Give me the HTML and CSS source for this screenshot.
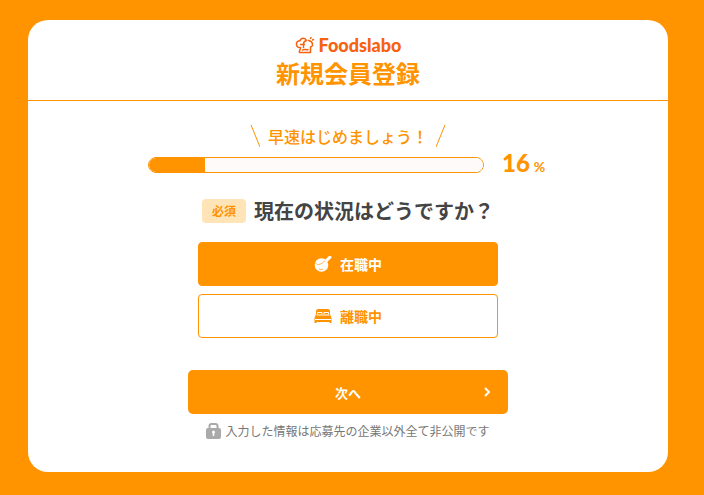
FILE: index.html
```
<!DOCTYPE html>
<html lang="ja">

<head>
    <meta charset="UTF-8">
    <meta name="viewport" content="width=device-width, initial-scale=1.0">
    <title>新規会員登録</title>
    <link rel="stylesheet" href="styles.css">
</head>

<body>
    <main class="card">
        <header class="card-header">
            <div class="logo">
                <svg class="logo-icon" viewBox="0 0 20 18" width="20" height="18" aria-hidden="true">
                    <path d="M5 11.500 C.5 11.500 0 5 5 4.800 C6 1.500 10.500 1.500 11.500 4.500 C9.500 5 8.500 6 8.500 8 V11.500 M5.500 8.500 H9.500 M13.500 4.500 C18.500 5.500 18.500 10.500 15.500 11 V16.500 H4.500 C3.500 15 5.500 14.500 5.500 11.500" />
                    <path d="M7.500 14 C9.500 12.500 11 14.500 13 13.500" />
                    <path d="M15.500 2.500 L16 1.500 M17.500 4 L18.500 3.500" />
                </svg>
                <span class="logo-text">Foodslabo</span>
            </div>
            <h1 class="title">新規会員登録</h1>
        </header>

        <form class="form">
            <div class="progress">
                <p class="progress-lead">
                    <svg class="slash" viewBox="0 0 10 24" width="10" height="24" aria-hidden="true"><path d="M1 1 L10 23" /></svg>
                    <span>早速はじめましょう！</span>
                    <svg class="slash" viewBox="0 0 10 24" width="10" height="24" aria-hidden="true"><path d="M9 1 L0 23" /></svg>
                </p>
                <div class="progress-row">
                    <progress class="progress-bar" value="16" max="96" aria-label="進捗"></progress>
                    <p class="progress-num">16<span class="progress-unit">%</span></p>
                </div>
            </div>

            <fieldset class="question">
                <legend class="question-title">
                    <span class="badge">必須</span>
                    <span>現在の状況はどうですか？</span>
                </legend>
                <label class="option">
                    <input type="radio" name="status" value="在職中" checked>
                    <svg class="option-icon" viewBox="0 0 18 16" width="18" height="16" aria-hidden="true">
                        <circle class="shape" cx="7.500" cy="9" r="6.800" />
                        <path class="handle" d="M11.500 5.500 L16 1.200" />
                        <path class="detail" d="M2 7.500 C3 9.500 8 8.500 11 4.500 M5 13 Q7 14 9 13" />
                    </svg>
                    在職中
                </label>
                <label class="option">
                    <input type="radio" name="status" value="離職中">
                    <svg class="option-icon" viewBox="0 0 18 16" width="18" height="16" aria-hidden="true">
                        <path class="shape" d="M2 6 V3.500 Q2 1 4.500 1 H13.500 Q16 1 16 3.500 V6 L17.500 10 V15 H15.500 V14 H2.500 V15 H.5 V10 Z" />
                        <path class="detail" d="M3.500 6 V4.500 H8 V6 M10 6 V4.500 H14.500 V6 M2.500 7 H15.500 M1 11.500 H17" />
                    </svg>
                    離職中
                </label>
            </fieldset>

            <button class="next" type="submit">
                次へ
                <svg class="next-arrow" viewBox="0 0 6 10" width="6" height="10" aria-hidden="true"><path d="M1 1 L5 5 L1 9" /></svg>
            </button>

            <p class="note">
                <svg class="lock" viewBox="0 0 15 16" width="15" height="16" aria-hidden="true">
                    <path class="shackle" d="M3.500 6 V3 Q3.500 1 5.500 1 H9.500 Q11.500 1 11.500 3 V6" />
                    <rect x="0" y="5" width="15" height="11" rx="2" />
                    <circle cx="7.500" cy="9" r="1.500" fill="#fff" />
                    <path class="keyhole" d="M7.500 9 V13" />
                </svg>
                入力した情報は応募先の企業以外全て非公開です
            </p>
        </form>
    </main>
</body>

</html>
```

FILE: styles.css
```
* {
    box-sizing: border-box;
}

body {
    margin: 0;
    padding: 20px 36px 20px 28px;
    background-color: #ff9300;
    color: #444;
    font-family: "Noto Sans CJK JP", sans-serif;
}

svg {
    flex-shrink: 0;
    fill: none;
    stroke: currentColor;
}

p,
h1 {
    margin: 0;
}

.card {
    max-width: 640px;
    margin: 0 auto;
    background-color: #fff;
    border-radius: 20px;
}

/* header */
.card-header {
    padding: 15px 0 10px;
    border-bottom: 1px solid #ff9300;
    text-align: center;
}

.logo {
    display: flex;
    justify-content: center;
    align-items: center;
    gap: 4px;
    height: 20px;
    color: #f7610f;
}

.logo-icon {
    stroke-width: 1.5;
    stroke-linecap: round;
    stroke-linejoin: round;
}

.logo-text {
    font-family: Lato, sans-serif;
    font-size: 18px;
    font-weight: 900;
    line-height: 20px;
}

.title {
    color: #ff9300;
    font-size: 24px;
    font-weight: bold;
    line-height: 35px;
}

/* form */
.form {
    display: flex;
    flex-direction: column;
    align-items: center;
    padding: 20px 28px 32px;
}

.progress {
    width: 100%;
    max-width: 400px;
    color: #ff9300;
}

.progress-lead {
    display: flex;
    justify-content: center;
    align-items: center;
    gap: 8px;
    height: 29px;
    font-size: 16px;
    font-weight: 500;
}

.progress-row {
    display: flex;
    align-items: center;
    gap: 18px;
    height: 30px;
}

.progress-bar {
    flex: 1;
    min-width: 0;
    height: 16px;
    border: 1px solid #ff9300;
    border-radius: 8px;
    background-color: #fdfaf9;
    overflow: hidden;
    appearance: none;
}

.progress-bar::-webkit-progress-bar {
    background-color: #fdfaf9;
}

.progress-bar::-webkit-progress-value {
    background-color: #ff9300;
}

.progress-num {
    width: 46px;
    font-family: Lato, sans-serif;
    font-size: 24px;
    font-weight: 900;
    line-height: 28px;
    white-space: nowrap;
}

.progress-unit {
    margin-left: 4px;
    font-size: 14px;
    font-weight: bold;
}

.question {
    display: flex;
    flex-direction: column;
    gap: 8px;
    width: 100%;
    max-width: 300px;
    margin: 16px 0 0;
    padding: 0;
    border: 0;
}

.question-title {
    display: flex;
    justify-content: center;
    align-items: center;
    gap: 8px;
    width: 100%;
    margin-bottom: 16px;
    padding: 0;
    font-size: 20px;
    font-weight: bold;
    line-height: 30px;
}

.badge {
    padding: 0 10px;
    border-radius: 4px;
    background-color: #ffe4b8;
    color: #ff9300;
    font-size: 12px;
    line-height: 24px;
}

.option {
    position: relative;
    display: flex;
    justify-content: center;
    align-items: center;
    gap: 8px;
    height: 44px;
    border: 1px solid #ff9300;
    border-radius: 4px;
    background-color: #fff;
    color: #ff9300;
    font-size: 14px;
    font-weight: bold;
    cursor: pointer;
}

.option input {
    position: absolute;
    inset: 0;
    width: 100%;
    height: 100%;
    margin: 0;
    opacity: 0;
    cursor: pointer;
}

.option:has(input:checked) {
    background-color: #ff9300;
    color: #fff;
}

.option-icon .shape {
    fill: currentColor;
    stroke: none;
}

.option-icon .handle {
    stroke-width: 3;
    stroke-linecap: round;
}

.option-icon .detail {
    stroke: #fff;
}

.option:has(input:checked) .detail {
    stroke: #ff9300;
    stroke-width: .7;
}

.next {
    display: grid;
    grid-template-columns: 1fr auto 1fr;
    align-items: center;
    width: 100%;
    max-width: 320px;
    height: 44px;
    margin-top: 32px;
    padding: 0 18px;
    border: 0;
    border-radius: 5px;
    background-color: #ff9300;
    color: #fff;
    font-family: inherit;
    font-size: 13px;
    font-weight: bold;
    cursor: pointer;
}

.next::before {
    content: "";
}

.next-arrow {
    justify-self: end;
    stroke-width: 2;
}

.note {
    display: flex;
    align-items: center;
    gap: 4px;
    margin-top: 8px;
    color: #777;
    font-size: 12px;
    line-height: 18px;
}

.lock {
    fill: #aaa;
    stroke: none;
}

.lock .shackle {
    fill: none;
    stroke: #aaa;
    stroke-width: 2;
}

.lock .keyhole {
    stroke: #fff;
    stroke-width: 1.5;
}
```
